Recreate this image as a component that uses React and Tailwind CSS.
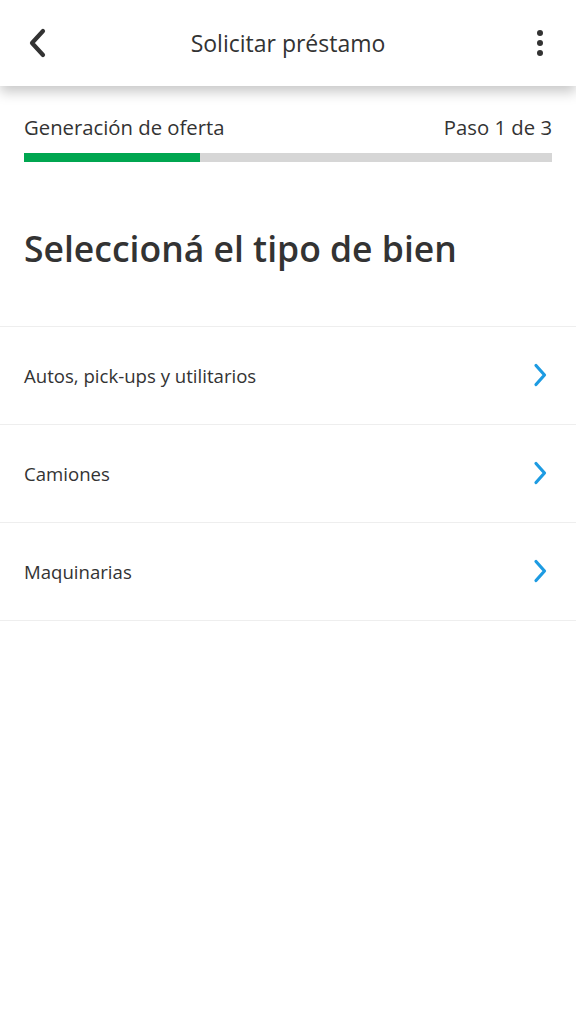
import React from "react";

const items = ["Autos, pick-ups y utilitarios", "Camiones", "Maquinarias"];

export default function App() {
  return (
    <div className="min-h-[1024px] w-[576px] bg-white text-[#333333]" style={{ fontFamily: '"Open Sans", "Noto Sans", sans-serif' }}>
      <header className="relative z-10 grid h-[86px] grid-cols-[64px_1fr_64px] items-center bg-white px-[24px] shadow-[0_6px_12px_rgba(0,0,0,0.22)]">
        <svg width="24" height="32" viewBox="0 0 24 32" className="ml-[1px] mt-[-1px]">
          <path d="M18 4 L7 16 L18 28" fill="none" stroke="#333333" strokeWidth="4.2" strokeLinecap="round" strokeLinejoin="round" />
        </svg>
        <h1 className="text-center text-[23px] leading-none text-[#333333]">Solicitar préstamo</h1>
        <div className="flex flex-col items-end gap-[4px] pr-[9px]">
          <span className="block h-[6px] w-[6px] rounded-full bg-[#333333]" />
          <span className="block h-[6px] w-[6px] rounded-full bg-[#333333]" />
          <span className="block h-[6px] w-[6px] rounded-full bg-[#333333]" />
        </div>
      </header>

      <section className="px-[24px] pt-[28px]">
        <div className="flex items-center justify-between text-[20.3px] leading-[26px] text-[#333333]">
          <span>Generación de oferta</span>
          <span>Paso 1 de 3</span>
        </div>
        <div className="mt-[13px] h-[9px] w-full bg-[#d6d6d6]">
          <div className="h-full w-[176px] bg-[#00a650]" />
        </div>
        <h2 className="mt-[64px] text-[35.5px] font-semibold leading-[44px] text-[#333333]">
          Seleccioná el tipo de bien
        </h2>
      </section>

      <ul className="mt-[56px] border-t border-[#eeeeee]">
        {items.map((t) => (
          <li key={t} className="flex h-[98px] items-center justify-between border-b border-[#eeeeee] pl-[24px] pr-[29px]">
            <span className="text-[18.6px] text-[#333333]">{t}</span>
            <svg width="14" height="24" viewBox="0 0 14 24" className="mt-[-1px]">
              <path d="M3 2.5 L11.5 12 L3 21.5" fill="none" stroke="#1d9be2" strokeWidth="3.2" strokeLinecap="round" strokeLinejoin="round" />
            </svg>
          </li>
        ))}
      </ul>
    </div>
  );
}
